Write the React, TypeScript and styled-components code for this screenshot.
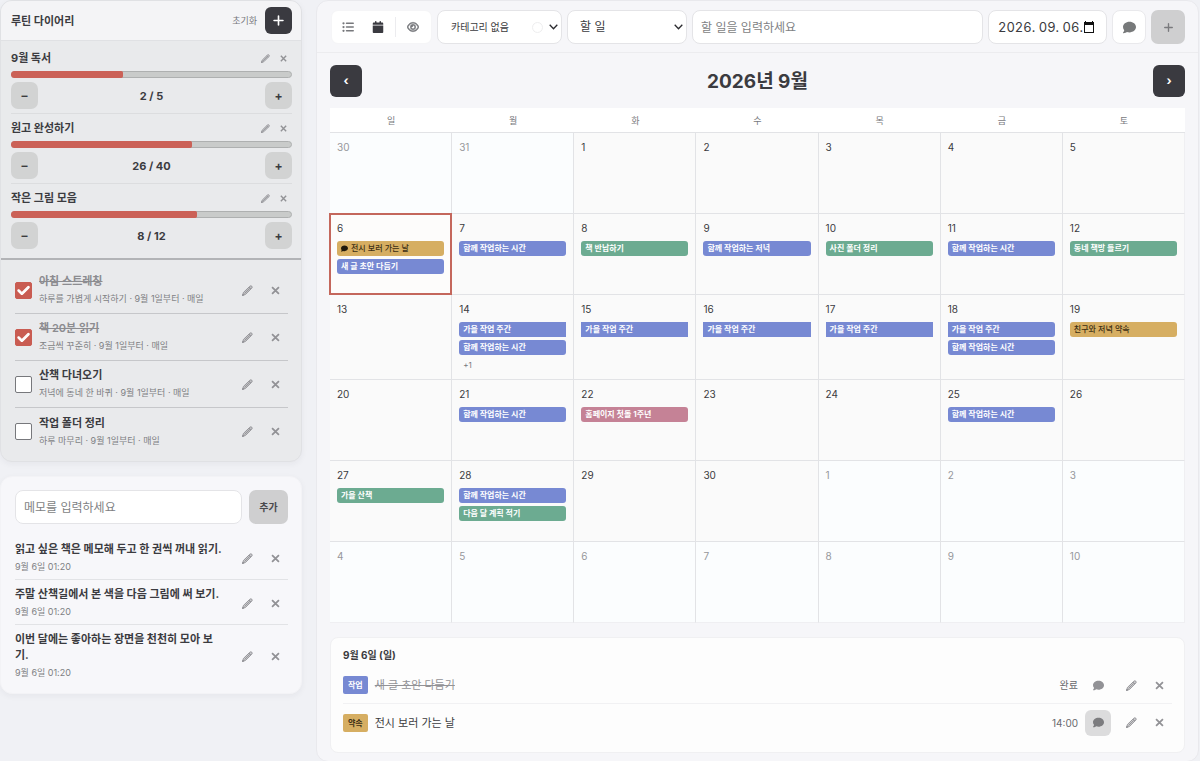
import React from "react";
import styled, { createGlobalStyle, css } from "styled-components";
import { FaComment, FaCalendar, FaListUl, FaRegEye, FaPlus, FaCheck } from "react-icons/fa6";

const Global = createGlobalStyle`
  *, *::before, *::after { box-sizing: border-box; }
  body {
    margin: 0;
    background: #f0f1f5;
    color: #3b3b40;
    font-family: Inter, "Noto Sans CJK KR", sans-serif;
    font-size: 11px;
    line-height: 16px;
  }
  button, input, select { font: inherit; color: inherit; margin: 0; }
  button { border: 0; padding: 0; background: none; cursor: pointer; }
  h1, h2, h3, p, ul { margin: 0; padding: 0; font: inherit; }
  ul { list-style: none; }
`;

const Page = styled.div`
  display: grid;
  grid-template-columns: 302px minmax(0, 1fr);
  gap: 14px;
  align-items: start;
  padding-right: 1px;
`;

const Sidebar = styled.aside`
  display: flex;
  flex-direction: column;
  gap: 14px;
`;

const Card = styled.section<{ $tone?: "grey" }>`
  background: ${(p) => (p.$tone === "grey" ? "#e9eaec" : "#f7f7fa")};
  border: 1px solid ${(p) => (p.$tone === "grey" ? "#e0e1e4" : "#f3f3f6")};
  border-radius: 12px;
  box-shadow: 0 2px 6px rgba(40, 45, 60, 0.05);
  overflow: hidden;
`;

const CardHeader = styled.header`
  display: flex;
  align-items: center;
  gap: 8px;
  height: 40px;
  padding: 0 9px 0 10px;
  background: #f4f4f6;
  border-bottom: 1px solid #e0e1e4;
`;

const CardTitle = styled.h1`
  flex: 1;
  font-size: 11px;
  font-weight: 700;
`;

const TextButton = styled.button`
  color: #77787c;
  font-size: 9px;
`;

const DarkButton = styled.button<{ $size: number }>`
  display: grid;
  place-items: center;
  width: ${(p) => p.$size}px;
  height: ${(p) => p.$size}px;
  border-radius: 6px;
  background: #3a3a40;
  color: #fff;
  font-size: 12px;
  font-weight: 700;
`;

const GoalList = styled.ul`
  padding: 3px 9px 4px 10px;
`;

const Goal = styled.li`
  height: 70px;
  padding-top: 4px;
  border-bottom: 1px solid #dcdddf;
  &:last-child { border-bottom: 0; }
`;

const GoalHead = styled.div`
  display: flex;
  align-items: center;
  height: 20px;
`;

const GoalName = styled.h2`
  flex: 1;
  font-size: 11px;
  font-weight: 700;
`;

const IconButton = styled.button<{ $size: number; $icon: number; $active?: boolean }>`
  display: grid;
  place-items: center;
  flex: none;
  width: ${(p) => p.$size}px;
  height: ${(p) => p.$size}px;
  border-radius: 6px;
  color: ${(p) => (p.$active ? "#7c7c7f" : "#929296")};
  background: ${(p) => (p.$active ? "#dcdcdd" : "transparent")};
  svg { width: ${(p) => p.$icon}px; height: ${(p) => p.$icon}px; }
`;

const Track = styled.div`
  height: 7px;
  margin-top: 3px;
  border: 1px solid #aeb0b0;
  border-radius: 4px;
  background: #c9cbca;
`;

const Fill = styled.div`
  height: 7px;
  margin: -1px;
  border-radius: 4px 2px 2px 4px;
  background: #cb6157;
`;

const Stepper = styled.div`
  display: flex;
  align-items: center;
  justify-content: space-between;
  margin-top: 4px;
`;

const StepButton = styled.button`
  width: 27px;
  height: 27px;
  border-radius: 7px;
  background: #d2d3d3;
  font-size: 12px;
  font-weight: 700;
`;

const Count = styled.output`
  font-size: 11px;
  font-weight: 700;
`;

const RoutineList = styled.ul`
  padding: 7px 13px 6px 14px;
  border-top: 2px solid #b2b3b6;
`;

const Routine = styled.li`
  display: flex;
  align-items: center;
  height: 47px;
  border-bottom: 1px solid #c6c7ca;
  &:last-child { border-bottom: 0; }
`;

const TickLabel = styled.label`
  position: relative;
  display: flex;
  align-items: center;
  flex: 1;
  gap: 7px;
`;

const Tick = styled.input`
  appearance: none;
  width: 17px;
  height: 17px;
  border: 1px solid #77787c;
  border-radius: 2px;
  background: #fff;
  &:checked { background: #c95c52; border-color: #c95c52; }
`;

const TickMark = styled(FaCheck)`
  position: absolute;
  left: 2px;
  color: #fff;
  width: 13px;
  height: 13px;
  stroke: #fff;
  stroke-width: 40px;
  pointer-events: none;
`;

const TickText = styled.span`
  display: flex;
  flex-direction: column;
`;

const Strong = styled.span<{ $done?: boolean }>`
  font-size: 11px;
  line-height: 16px;
  font-weight: ${(p) => (p.$done ? 600 : 700)};
  color: ${(p) => (p.$done ? "#8c8c90" : "#3b3b40")};
  text-decoration: ${(p) => (p.$done ? "line-through" : "none")};
`;

const Sub = styled.span`
  margin-top: 2px;
  font-size: 9px;
  line-height: 16px;
  color: #7e7f83;
`;

const RowActions = styled.div`
  display: flex;
  gap: 2px;
`;

const MemoForm = styled.form`
  display: flex;
  gap: 7px;
  padding: 13px 13px 11px 14px;
`;

const field = css`
  height: 34px;
  border: 1px solid #e4e4e7;
  border-radius: 8px;
  background: #fff;
  padding: 0 8px;
  font-size: 12px;
  &::placeholder { color: #7e7f83; opacity: 1; }
`;

const TextField = styled.input`
  ${field}
  flex: 1;
  min-width: 0;
`;

const AddButton = styled.button<{ $width: number; $muted?: boolean }>`
  display: grid;
  place-items: center;
  width: ${(p) => p.$width}px;
  height: 34px;
  border-radius: 7px;
  background: #cfcfd0;
  font-size: 10px;
  font-weight: 700;
  color: ${(p) => (p.$muted ? "#7a7a7d" : "#4a4a4e")};
`;

const MemoList = styled.ul`
  padding: 0 13px 8px 14px;
`;

const Memo = styled.li`
  display: flex;
  align-items: center;
  padding: 6px 0 4px;
  border-bottom: 1px solid #e2e3e6;
  &:last-child { border-bottom: 0; }
`;

const MemoText = styled.div`
  display: flex;
  flex-direction: column;
  flex: 1;
  padding-right: 11px;
`;

const Main = styled.main`
  background: #f6f6f9;
  border: 1px solid #e9e9ed;
  border-radius: 12px;
`;

const Toolbar = styled.form`
  display: flex;
  gap: 5px;
  padding: 9px 13px 8px 14px;
  border-bottom: 1px solid #ececef;
`;

const Segments = styled.div`
  display: flex;
  align-items: center;
  width: 101px;
  height: 34px;
  padding: 0 1px;
  border-radius: 7px;
  background: #fff;
  border: 1px solid #f5f5f7;
`;

const Segment = styled.button<{ $on?: boolean }>`
  display: grid;
  place-items: center;
  width: 30px;
  height: 30px;
  color: ${(p) => (p.$on ? "#3a3a40" : "#77787c")};
  svg { width: 12px; height: 12px; }
`;

const BoldEye = styled(FaRegEye)`
  stroke: currentColor;
  stroke-width: 24px;
`;

const Divider = styled.span`
  width: 1px;
  height: 20px;
  margin: 0 2px;
  background: #ececef;
`;

const SelectWrap = styled.div<{ $width: number }>`
  position: relative;
  width: ${(p) => p.$width}px;
`;

const Select = styled.select<{ $small?: boolean }>`
  ${field}
  appearance: none;
  width: 100%;
  padding: 0 0 0 ${(p) => (p.$small ? 13 : 12)}px;
  font-size: ${(p) => (p.$small ? 10 : 12)}px;
`;

const Chevron = styled.svg`
  position: absolute;
  right: 4px;
  top: 14px;
  pointer-events: none;
`;

const Swatch = styled.span`
  position: absolute;
  right: 19px;
  top: 12px;
  width: 11px;
  height: 11px;
  border: 1px solid #eeeeef;
  border-radius: 50%;
  pointer-events: none;
`;

const DateWrap = styled.div`
  ${field}
  display: flex;
  align-items: center;
  width: 119px;
  padding: 0 0 0 9px;
`;

const DateInput = styled.input`
  width: 85px;
  padding: 0;
  border: 0;
  background: none;
  font-size: 13px;
  font-variant-numeric: tabular-nums;
`;

const SquareButton = styled.button`
  display: grid;
  place-items: center;
  width: 34px;
  height: 34px;
  border: 1px solid #e9e9ec;
  border-radius: 8px;
  background: #fff;
  color: #77797a;
  svg { width: 13px; height: 13px; }
`;

const Content = styled.div`
  padding: 11px 13px 8px;
`;

const MonthBar = styled.div`
  display: flex;
  align-items: center;
  justify-content: space-between;
  height: 34px;
  margin-bottom: 10px;
`;

const MonthTitle = styled.h2`
  padding-top: 2px;
  font-size: 19px;
  line-height: 28px;
  font-weight: 700;
`;

const Calendar = styled.table`
  width: 100%;
  table-layout: fixed;
  border-spacing: 0;
`;

const Weekday = styled.th`
  height: 25px;
  padding: 2px 0 0;
  background: #fff;
  border-bottom: 1px solid #e2e3e6;
  font-size: 9px;
  font-weight: 400;
  color: #77787c;
`;

const Day = styled.td<{ $outside?: boolean; $today?: boolean }>`
  position: relative;
  height: 81px;
  padding: 6px 7px;
  vertical-align: top;
  background: ${(p) => (p.$outside ? "#fbfdfe" : "#fafafa")};
  border-right: 1px solid #e2e3e6;
  border-bottom: 1px solid #e2e3e6;
  color: ${(p) => (p.$outside ? "#96979b" : "#3b3b40")};
  &:last-child { border-right-color: #efeff2; }
  tr:last-child > & { border-bottom-color: #efeff2; }
  ${(p) => p.$today && css`
    background: #fdfcfb;
    &::after {
      content: "";
      position: absolute;
      inset: -1px;
      border: 2px solid #c4675c;
      pointer-events: none;
    }
  `}
`;

const DayNumber = styled.div`
  font-size: 10px;
  line-height: 16px;
`;

const colours = { blue: "#7789d3", green: "#6cab91", gold: "#d6ae62", rose: "#c58296" };
type Colour = keyof typeof colours;

const EventList = styled.ul`
  display: flex;
  flex-direction: column;
  gap: 3px;
  margin-top: 5px;
`;

const Event = styled.li<{ $colour: Colour; $span?: "start" | "mid" | "end" }>`
  display: flex;
  align-items: center;
  gap: 3px;
  height: 15px;
  padding: 0 4px;
  border-radius: ${(p) =>
    p.$span === "start" ? "3px 0 0 3px" : p.$span === "mid" ? "0" : p.$span === "end" ? "0 3px 3px 0" : "3px"};
  background: ${(p) => colours[p.$colour]};
  color: ${(p) => (p.$colour === "gold" ? "#3c2f14" : "#fff")};
  font-size: 8px;
  line-height: 15px;
  font-weight: ${(p) => (p.$colour === "gold" ? 500 : 700)};
  white-space: nowrap;
  svg { width: 7px; height: 7px; color: #1f190c; }
`;

const More = styled.li`
  padding-left: 4px;
  height: 15px;
  font-size: 8px;
  line-height: 15px;
  color: #77787c;
`;

const Agenda = styled.section`
  margin-top: 14px;
  padding: 9px 12px 11px;
  background: #fdfdfd;
  border: 1px solid #f0f0f2;
  border-radius: 8px;
`;

const AgendaTitle = styled.h3`
  font-size: 10px;
  font-weight: 700;
  margin-bottom: 4px;
`;

const AgendaRow = styled.li`
  display: flex;
  align-items: center;
  height: 37px;
  border-bottom: 1px solid #f1f1f3;
  &:last-child { border-bottom: 0; }
`;

const Tag = styled.span<{ $colour: Colour }>`
  padding: 0 5px;
  height: 18px;
  border-radius: 2px;
  background: ${(p) => colours[p.$colour]};
  color: ${(p) => (p.$colour === "gold" ? "#3c2f14" : "#fff")};
  font-size: 8px;
  line-height: 18px;
  font-weight: 700;
`;

const AgendaText = styled.span<{ $done?: boolean }>`
  flex: 1;
  padding-left: 7px;
  color: ${(p) => (p.$done ? "#929296" : "#3b3b40")};
  text-decoration: ${(p) => (p.$done ? "line-through" : "none")};
`;

const AgendaMeta = styled.span`
  padding-right: 7px;
  font-size: 10px;
  color: #68696d;
`;

const AgendaActions = styled.div`
  display: flex;
  align-items: center;
  gap: 7px;
`;

const goals = [
  { name: "9월 독서", done: 2, total: 5 },
  { name: "원고 완성하기", done: 26, total: 40 },
  { name: "작은 그림 모음", done: 8, total: 12 },
];

const routines = [
  { name: "아침 스트레칭", note: "하루를 가볍게 시작하기 · 9월 1일부터 · 매일", done: true },
  { name: "책 20분 읽기", note: "조금씩 꾸준히 · 9월 1일부터 · 매일", done: true },
  { name: "산책 다녀오기", note: "저녁에 동네 한 바퀴 · 9월 1일부터 · 매일", done: false },
  { name: "작업 폴더 정리", note: "하루 마무리 · 9월 1일부터 · 매일", done: false },
];

const memos = [
  "읽고 싶은 책은 메모해 두고 한 권씩 꺼내 읽기.",
  "주말 산책길에서 본 색을 다음 그림에 써 보기.",
  "이번 달에는 좋아하는 장면을 천천히 모아 보기.",
];

type Entry = { text: string; colour: Colour; span?: "start" | "mid" | "end"; comment?: boolean };
const together: Entry = { text: "함께 작업하는 시간", colour: "blue" };
const week = (span: Entry["span"]): Entry => ({ text: "가을 작업 주간", colour: "blue", span });

const entries: Record<number, Entry[]> = {
  6: [
    { text: "전시 보러 가는 날", colour: "gold", comment: true },
    { text: "새 글 초안 다듬기", colour: "blue" },
  ],
  7: [together],
  8: [{ text: "책 반납하기", colour: "green" }],
  9: [{ text: "함께 작업하는 저녁", colour: "blue" }],
  10: [{ text: "사진 폴더 정리", colour: "green" }],
  11: [together],
  12: [{ text: "동네 책방 들르기", colour: "green" }],
  14: [week("start"), together],
  15: [week("mid")],
  16: [week("mid")],
  17: [week("mid")],
  18: [week("end"), together],
  19: [{ text: "친구와 저녁 약속", colour: "gold" }],
  21: [together],
  22: [{ text: "홈페이지 첫돌 1주년", colour: "rose" }],
  25: [together],
  27: [{ text: "가을 산책", colour: "green" }],
  28: [together, { text: "다음 달 계획 적기", colour: "green" }],
};

const more: Record<number, number> = { 14: 1 };
const weekdays = ["일", "월", "화", "수", "목", "금", "토"];

const weeks = Array.from({ length: 6 }, (_, w) =>
  Array.from({ length: 7 }, (_, d) => {
    const n = w * 7 + d - 1;
    if (n < 1) return { day: n + 31, outside: true };
    if (n > 30) return { day: n - 30, outside: true };
    return { day: n, outside: false };
  })
);

function PencilIcon() {
  return (
    <svg viewBox="0 0 12 12" aria-hidden="true">
      <path d="M0.500 11.500l1.100-3.400 6.900-6.700q1.200-1.100 2.200-.1t-.1 2.200L3.800 10.300z" fill="currentColor" fillOpacity="0.45" stroke="currentColor" strokeWidth="1" strokeLinejoin="round" />
      <path d="M2.800 9.200l5.700-5.600M7.700 2.300l2 2M0.500 11.500l1.600-.6-1-1z" fill="none" stroke="currentColor" strokeWidth="1" />
    </svg>
  );
}

function CrossIcon() {
  return (
    <svg viewBox="0 0 10 10" aria-hidden="true">
      <path d="M1.200 1.200l7.600 7.600M8.800 1.200L1.200 8.800" stroke="currentColor" strokeWidth="2" />
    </svg>
  );
}

function SelectChevron() {
  return (
    <Chevron width="9" height="6" viewBox="0 0 9 6" aria-hidden="true">
      <path d="M0.700 0.800l3.800 4 3.800-4" fill="none" stroke="#2b2b2f" strokeWidth="1.300" />
    </Chevron>
  );
}

function EditButtons({ size, pencil, cross }: { size: number; pencil: number; cross: number }) {
  return (
    <>
      <IconButton type="button" $size={size} $icon={pencil} aria-label="수정"><PencilIcon /></IconButton>
      <IconButton type="button" $size={size} $icon={cross} aria-label="삭제"><CrossIcon /></IconButton>
    </>
  );
}

export default function App() {
  return (
    <>
      <Global />
      <Page>
        <Sidebar>
          <Card $tone="grey">
            <CardHeader>
              <CardTitle>루틴 다이어리</CardTitle>
              <TextButton type="button">초기화</TextButton>
              <DarkButton type="button" $size={27} aria-label="루틴 추가"><FaPlus size={13} /></DarkButton>
            </CardHeader>
            <GoalList>
              {goals.map((g) => (
                <Goal key={g.name}>
                  <GoalHead>
                    <GoalName>{g.name}</GoalName>
                    <EditButtons size={18} pencil={9} cross={7} />
                  </GoalHead>
                  <Track role="progressbar" aria-label={g.name} aria-valuenow={g.done} aria-valuemax={g.total}>
                    <Fill style={{ width: `${(g.done / g.total) * 100}%` }} />
                  </Track>
                  <Stepper>
                    <StepButton type="button">–</StepButton>
                    <Count>{g.done} / {g.total}</Count>
                    <StepButton type="button">+</StepButton>
                  </Stepper>
                </Goal>
              ))}
            </GoalList>
            <RoutineList>
              {routines.map((r) => (
                <Routine key={r.name}>
                  <TickLabel>
                    <Tick type="checkbox" defaultChecked={r.done} />
                    {r.done && <TickMark />}
                    <TickText>
                      <Strong $done={r.done}>{r.name}</Strong>
                      <Sub>{r.note}</Sub>
                    </TickText>
                  </TickLabel>
                  <RowActions><EditButtons size={26} pencil={11} cross={9} /></RowActions>
                </Routine>
              ))}
            </RoutineList>
          </Card>

          <Card>
            <MemoForm>
              <TextField aria-label="메모" placeholder="메모를 입력하세요" />
              <AddButton type="button" $width={39}>추가</AddButton>
            </MemoForm>
            <MemoList>
              {memos.map((m) => (
                <Memo key={m}>
                  <MemoText>
                    <Strong>{m}</Strong>
                    <Sub>9월 6일 01:20</Sub>
                  </MemoText>
                  <RowActions><EditButtons size={26} pencil={11} cross={9} /></RowActions>
                </Memo>
              ))}
            </MemoList>
          </Card>
        </Sidebar>

        <Main>
          <Toolbar>
            <Segments>
              <Segment type="button" aria-label="목록"><FaListUl /></Segment>
              <Segment type="button" $on aria-label="달력"><FaCalendar /></Segment>
              <Divider />
              <Segment type="button" aria-label="보기"><BoldEye /></Segment>
            </Segments>
            <SelectWrap $width={125}>
              <Select $small aria-label="카테고리"><option>카테고리 없음</option></Select>
              <Swatch />
              <SelectChevron />
            </SelectWrap>
            <SelectWrap $width={120}>
              <Select aria-label="종류"><option>할 일</option></Select>
              <SelectChevron />
            </SelectWrap>
            <TextField aria-label="할 일" placeholder="할 일을 입력하세요" />
            <DateWrap>
              <DateInput aria-label="날짜" defaultValue="2026. 09. 06." />
              <svg width="12" height="13" viewBox="0 0 12 13" aria-hidden="true">
                <path d="M2 0h1v1h6V0h1v1h1v11H1V1h1zM2 4v7h8V4z" fill="#111" fillRule="evenodd" />
              </svg>
            </DateWrap>
            <SquareButton type="button" aria-label="댓글"><FaComment /></SquareButton>
            <AddButton type="button" $width={34} $muted aria-label="추가"><FaPlus size={11} /></AddButton>
          </Toolbar>

          <Content>
            <MonthBar>
              <DarkButton type="button" $size={32} aria-label="이전 달">‹</DarkButton>
              <MonthTitle>2026년 9월</MonthTitle>
              <DarkButton type="button" $size={32} aria-label="다음 달">›</DarkButton>
            </MonthBar>

            <Calendar>
              <thead>
                <tr>{weekdays.map((d) => <Weekday key={d} scope="col">{d}</Weekday>)}</tr>
              </thead>
              <tbody>
                {weeks.map((days, w) => (
                  <tr key={w}>
                    {days.map(({ day, outside }) => {
                      const list = outside ? [] : entries[day] ?? [];
                      return (
                        <Day key={day} $outside={outside} $today={!outside && day === 6}>
                          <DayNumber>{day}</DayNumber>
                          {list.length > 0 && (
                            <EventList>
                              {list.map((e) => (
                                <Event key={e.text} $colour={e.colour} $span={e.span}>
                                  {e.comment && <FaComment />}
                                  {e.text}
                                </Event>
                              ))}
                              {more[day] && <More>+{more[day]}</More>}
                            </EventList>
                          )}
                        </Day>
                      );
                    })}
                  </tr>
                ))}
              </tbody>
            </Calendar>

            <Agenda>
              <AgendaTitle>9월 6일 (일)</AgendaTitle>
              <ul>
                <AgendaRow>
                  <Tag $colour="blue">작업</Tag>
                  <AgendaText $done>새 글 초안 다듬기</AgendaText>
                  <AgendaMeta>완료</AgendaMeta>
                  <AgendaActions>
                    <IconButton type="button" $size={26} $icon={11} aria-label="댓글"><FaComment /></IconButton>
                    <RowActions><EditButtons size={26} pencil={11} cross={9} /></RowActions>
                  </AgendaActions>
                </AgendaRow>
                <AgendaRow>
                  <Tag $colour="gold">약속</Tag>
                  <AgendaText>전시 보러 가는 날</AgendaText>
                  <AgendaMeta>14:00</AgendaMeta>
                  <AgendaActions>
                    <IconButton type="button" $size={26} $icon={11} $active aria-label="댓글"><FaComment /></IconButton>
                    <RowActions><EditButtons size={26} pencil={11} cross={9} /></RowActions>
                  </AgendaActions>
                </AgendaRow>
              </ul>
            </Agenda>
          </Content>
        </Main>
      </Page>
    </>
  );
}
